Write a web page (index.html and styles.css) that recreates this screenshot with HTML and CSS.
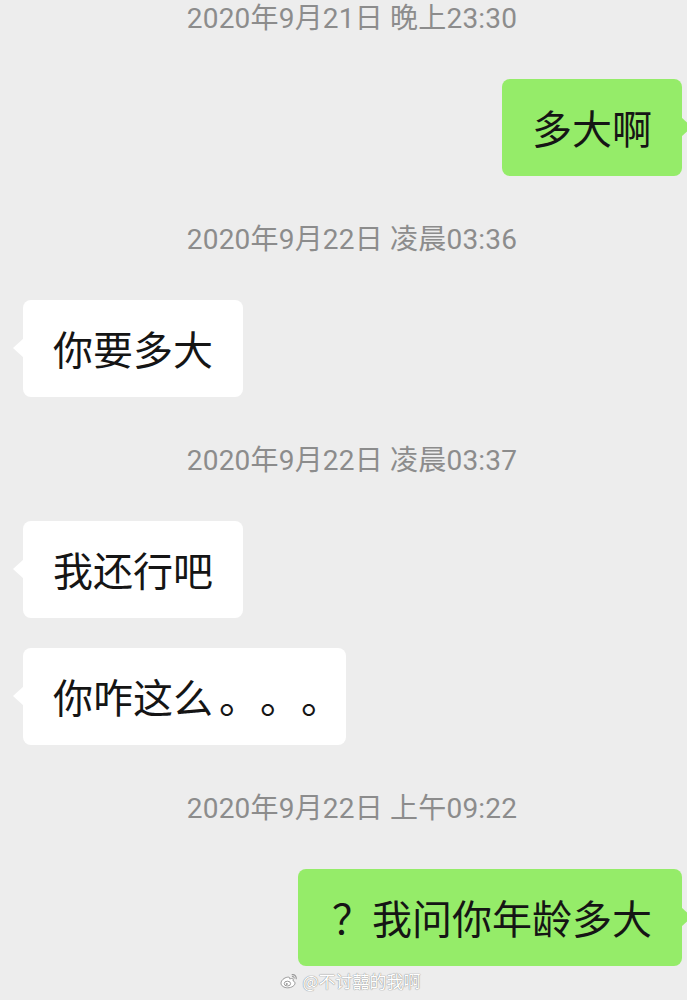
FILE: index.html
```html
<!DOCTYPE html>
<html lang="zh-CN">
  <head>
    <meta charset="UTF-8">
    <meta name="viewport" content="width=device-width, initial-scale=1.0">
    <title>聊天记录</title>
    <link rel="stylesheet" href="styles.css">
  </head>
  <body>
    <div class="chat">
      <div class="time first">2020年9月21日 晚上23:30</div>
      <div class="row mine">
        <div class="bubble green">多大啊</div>
      </div>

      <div class="time">2020年9月22日 凌晨03:36</div>
      <div class="row theirs">
        <div class="bubble white">你要多大</div>
      </div>

      <div class="time">2020年9月22日 凌晨03:37</div>
      <div class="row theirs">
        <div class="bubble white">我还行吧</div>
      </div>
      <div class="row theirs next">
        <div class="bubble white">你咋这么<span class="dots">。。。</span></div>
      </div>

      <div class="time">2020年9月22日 上午09:22</div>
      <div class="row mine">
        <div class="bubble green question">？我问你年龄多大</div>
      </div>

      <div class="watermark">
        <svg class="weibo" width="18" height="16" viewBox="0 0 18 16">
          <path d="M7.5 4.2C4.2 4.6 1 7.4 1 10.2c0 2.6 3 4.6 6.6 4.6 4.2 0 7.4-2.4 7.4-4.6 0-1.6-1.4-2.2-2-2.3.6-1.4.3-2.6-1.6-2.4-.8.1-1.6.5-1.6.5.3-1.4-.6-2.1-2.3-1.8z" fill="#fff" stroke="#9a9a9a" stroke-width="1"/>
          <ellipse cx="7.4" cy="10.6" rx="3.2" ry="2.4" fill="none" stroke="#9a9a9a" stroke-width="1"/>
          <circle cx="6.8" cy="10.9" r="1" fill="#9a9a9a"/>
          <path d="M12.2 1.6c2.4-.4 4.4 1.6 4 4" fill="none" stroke="#9a9a9a" stroke-width="1.2" stroke-linecap="round"/>
          <path d="M12.4 3.6c1-.2 1.9.6 1.7 1.6" fill="none" stroke="#9a9a9a" stroke-width="1.1" stroke-linecap="round"/>
        </svg>
        <span>@不讨囍的我啊</span>
      </div>
    </div>
  </body>
</html>
```

FILE: styles.css
```css
body {
  margin: 0;
  background-color: #ededed;
  font-family: "Noto Sans CJK SC", "Noto Sans", sans-serif;
}

.chat {
  display: flex;
  flex-direction: column;
  height: 1000px;
  overflow: hidden;
}

.time {
  margin: 49px 0 45px;
  padding-left: 17px;
  text-align: center;
  font-family: Roboto, "Noto Sans CJK SC", sans-serif;
  font-size: 28px;
  line-height: 30px;
  letter-spacing: 0.2px;
  color: #8c8c8c;
}

.time.first {
  margin-top: 4px;
}

.row {
  display: flex;
}

.row.mine {
  justify-content: flex-end;
  margin-right: 5px;
}

.row.theirs {
  justify-content: flex-start;
  margin-left: 23px;
}

.row.next {
  margin-top: 30px;
}

.bubble {
  position: relative;
  padding: 28px 30px 29px 30px;
  border-radius: 8px;
  font-size: 40px;
  line-height: 40px;
  color: #151515;
  white-space: nowrap;
  text-spacing-trim: space-all;
}

.bubble.question {
  padding-left: 34px;
}

.bubble .dots {
  margin-left: 6px;
  margin-right: -26px;
  letter-spacing: 1px;
}

.bubble::before {
  content: "";
  position: absolute;
  top: 38px;
  width: 0;
  height: 0;
  border-top: 10px solid transparent;
  border-bottom: 10px solid transparent;
}

.white {
  background-color: #fff;
}

.white::before {
  left: -10px;
  border-right: 11px solid #fff;
}

.green {
  background-color: #95ec69;
}

.green::before {
  right: -10px;
  border-left: 11px solid #95ec69;
}

.watermark {
  display: flex;
  align-items: center;
  justify-content: center;
  gap: 4px;
  margin-top: 4px;
  padding-left: 14px;
  font-size: 17px;
  line-height: 22px;
  color: #fff;
  text-shadow: 0 0 1px #8a8a8a, 0 0 1px #8a8a8a;
}
```
